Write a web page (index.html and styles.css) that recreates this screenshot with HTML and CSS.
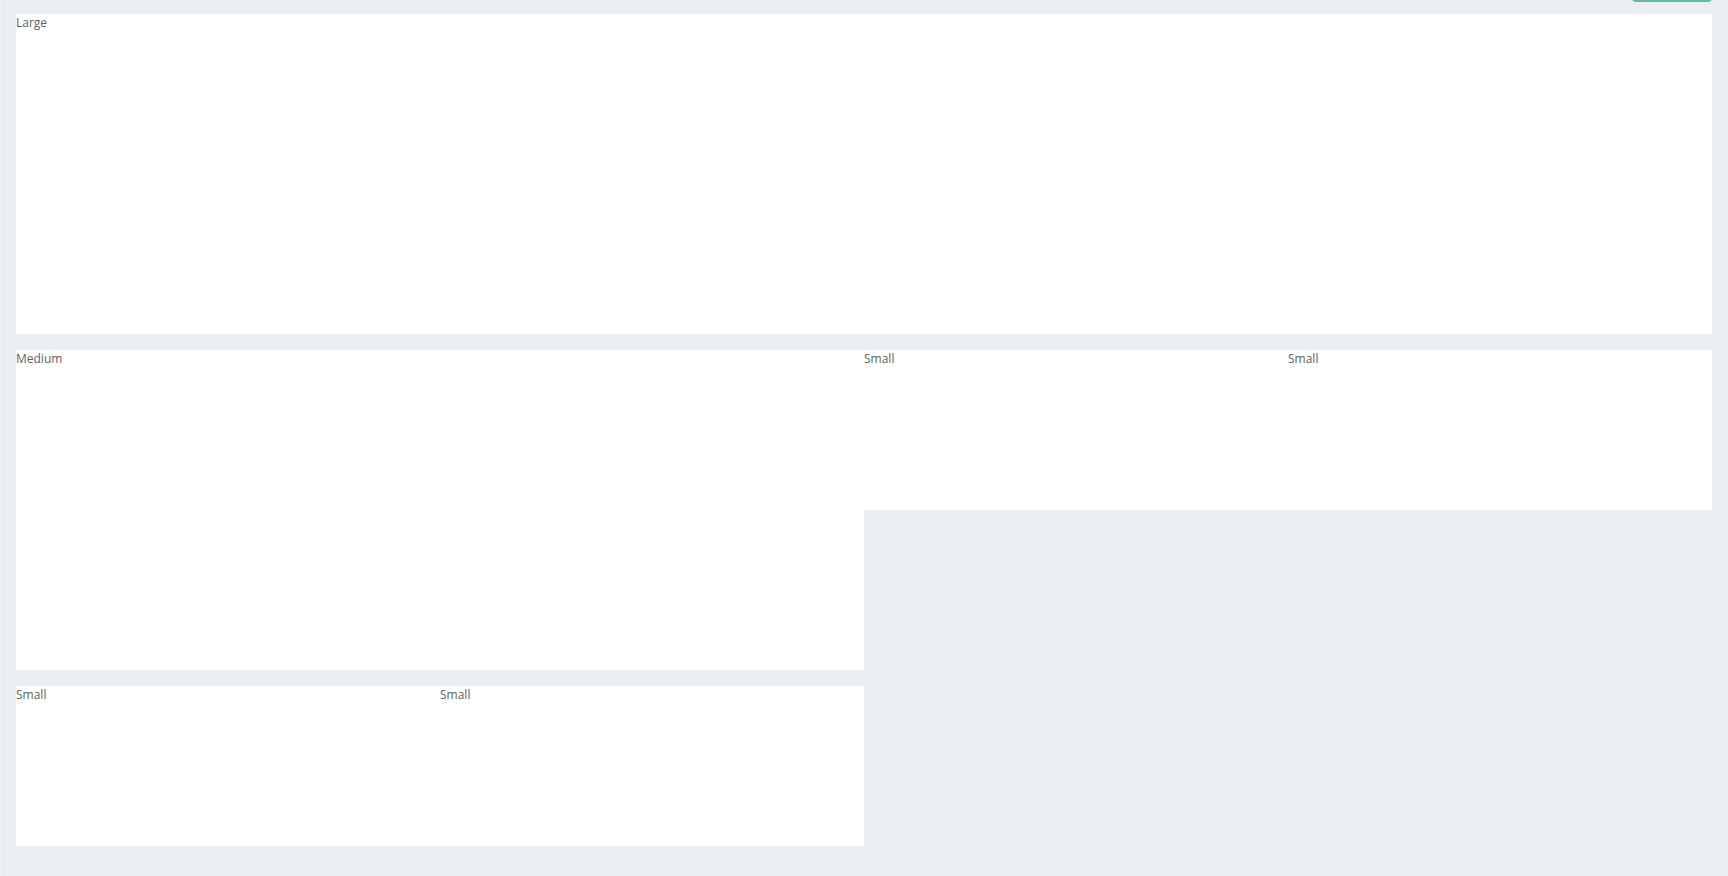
FILE: index.html
```html
<!DOCTYPE html>
<html lang="en">
<head>
    <meta charset="UTF-8">
    <meta name="viewport" content="width=device-width, initial-scale=1.0">
    <title>Dashboard</title>
    <link rel="stylesheet" href="styles.css">
</head>
<body>
    <div class="page">
        <div class="toolbar">
            <button class="add-btn" title="Add widget"></button>
        </div>
        <div class="widgets">
            <div class="widget large"><span class="title">Large</span></div>
            <div class="widget medium"><span class="title">Medium</span></div>
            <div class="widget small"><span class="title">Small</span></div>
            <div class="widget small"><span class="title">Small</span></div>
            <div class="widget small"><span class="title">Small</span></div>
            <div class="widget small"><span class="title">Small</span></div>
        </div>
    </div>
</body>
</html>
```

FILE: styles.css
```css
html, body {
    margin: 0;
    height: 100%;
}
body {
    font-family: "Open Sans", "Noto Sans", Arial, sans-serif;
    background-color: #eceff1;
    color: #5f5f5f;
    overflow: hidden;
}
.page {
    width: 1728px;
    min-height: 100%;
    box-sizing: border-box;
    padding: 0 16px 0 13px;
    border-left: 3px solid #eef1f3;
    box-shadow: inset 1px 0 0 #e3e6e9;
}
.toolbar {
    display: flex;
    justify-content: flex-end;
    height: 14px;
}
.add-btn {
    margin-top: -30px;
    width: 80px;
    height: 32px;
    border: none;
    border-radius: 4px;
    background: #5dbd9d;
}
.widgets {
    display: flex;
    flex-wrap: wrap;
    align-items: flex-start;
    width: 1696px;
}
.widget {
    background: #fff;
    margin-bottom: 16px;
    box-sizing: border-box;
}
.widget .title {
    display: block;
    font-size: 12px;
    color: #5f5f5f;
}
.large {
    width: 1696px;
    height: 320px;
}
.medium {
    width: 848px;
    height: 320px;
}
.small {
    width: 424px;
    height: 160px;
}
```
